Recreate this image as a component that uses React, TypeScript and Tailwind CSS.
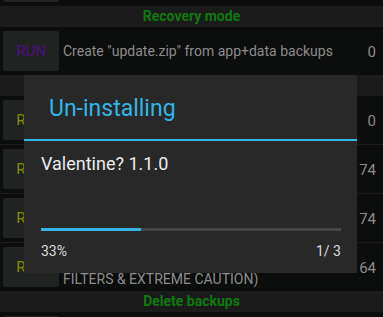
import React from "react";

const font = "font-['Roboto','Liberation_Sans',sans-serif]";

function Row({
  label,
  labelColor,
  text,
  count,
  divider = true,
  leading = "leading-[19px]",
}: {
  label: string;
  labelColor: string;
  text: React.ReactNode;
  count: string;
  divider?: boolean;
  leading?: string;
}) {
  return (
    <>
      <div className="flex h-12 items-center pl-[3px] pr-[7px]">
        <div
          className={`flex h-10 w-14 shrink-0 items-center justify-center rounded-[2px] bg-[#212222] text-[15px] ${labelColor}`}
        >
          {label}
        </div>
        <div className={`ml-1 flex-1 whitespace-nowrap text-[14px] text-[#8c8c8c] ${leading}`}>{text}</div>
        <div className="ml-2 pt-[2px] text-[15px] text-[#8c8c8c]">{count}</div>
      </div>
      {divider && <div className="h-px bg-[#1c1c1c]" />}
    </>
  );
}

function Header({ children }: { children: React.ReactNode }) {
  return (
    <div className="flex h-[21px] items-center justify-center bg-[#1b1b1b] text-[14px] font-bold text-[#0e7a0e]">
      {children}
    </div>
  );
}

export default function App() {
  return (
    <div className={`relative h-[317px] w-[383px] overflow-hidden bg-[#0c0d0d] ${font}`}>
      <div className="-mt-[42px] flex flex-col">
        <Row label="RUN" labelColor="text-[#5a0f8a]" text="Freeze all user apps" count="0" divider={false} />
        <Header>Recovery mode</Header>
        <Row
          label="RUN"
          labelColor="text-[#4f0f80]"
          text={'Create "update.zip" from app+data backups'}
          count="0"
          divider={false}
        />
        <Header>Restore</Header>
        <Row label="RUN" labelColor="text-[#8a8a00]" text="Restore missing apps + system data" count="0" />
        <Row label="RUN" labelColor="text-[#8a8a00]" text="Restore missing apps with data" count="74" />
        <Row label="RUN" labelColor="text-[#8a8a00]" text="Restore all apps with data" count="74" />
        <Row
          label="RUN"
          labelColor="text-[#8a8a00]"
          leading="leading-[21px]"
          text={
            <div className="pt-[4px]">
              Restore all system data (USE WITH
              <br />
              FILTERS &amp; EXTREME CAUTION)
            </div>
          }
          count="164"
          divider={false}
        />
        <Header>Delete backups</Header>
        <Row label="RUN" labelColor="text-[#8a1010]" text="Delete backups of uninstalled apps" count="0" />
      </div>

      <div className="absolute left-[24px] top-[75px] flex h-[198px] w-[333px] flex-col bg-[#282828]">
        <div className="flex h-[64px] items-center pl-[25px] pt-[5px] text-[23px] text-[#33b5e5]">Un-installing</div>
        <div className="h-[2px] bg-[#33b5e5]" />
        <div className="flex flex-col pl-[17px] pr-[16px]">
          <div className="mt-[13px] h-[20px] text-[18px] leading-[20px] text-[#ececec]">Valentine? 1.1.0</div>
          <div className="mt-[54px] h-[3px] bg-[#454545]">
            <div className="h-full w-1/3 bg-[#33b5e5]" />
          </div>
          <div className="mt-[12px] flex justify-between text-[14px] leading-[17px] text-[#dcdcdc]">
            <span>33%</span>
            <span>1/ 3</span>
          </div>
        </div>
      </div>
    </div>
  );
}
